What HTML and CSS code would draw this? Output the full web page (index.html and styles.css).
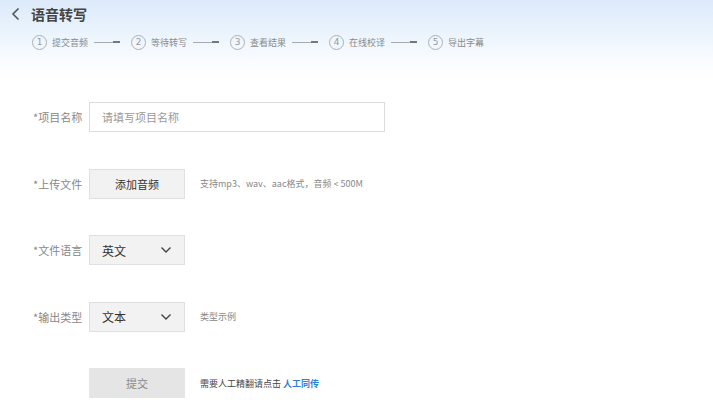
FILE: index.html
```html
<!DOCTYPE html>
<html lang="zh-CN">
<head>
  <meta charset="UTF-8">
  <meta name="viewport" content="width=device-width, initial-scale=1">
  <title>语音转写</title>
  <link rel="stylesheet" href="styles.css">
</head>
<body>

  <div class="page">
    <div class="header">
      <div class="title-bar">
        <svg class="back" width="12" height="14" viewBox="0 0 12 14"><path d="M8.5 1.5 L3 7 L8.5 12.5" fill="none" stroke="#555" stroke-width="1.6"/></svg>
        <span class="title">语音转写</span>
      </div>
      <div class="steps">
        <div class="step"><span class="num">1</span>提交音频</div>
        <span class="arrow"></span>
        <div class="step"><span class="num">2</span>等待转写</div>
        <span class="arrow"></span>
        <div class="step"><span class="num">3</span>查看结果</div>
        <span class="arrow"></span>
        <div class="step"><span class="num">4</span>在线校译</div>
        <span class="arrow"></span>
        <div class="step"><span class="num">5</span>导出字幕</div>
      </div>
    </div>

    <div class="form">
      <div class="row">
        <label class="label">*项目名称</label>
        <input class="input" type="text" placeholder="请填写项目名称">
      </div>
      <div class="row">
        <label class="label">*上传文件</label>
        <div class="btn">添加音频</div>
        <span class="hint">支持mp3、wav、aac格式，音频 &lt; 500M</span>
      </div>
      <div class="row">
        <label class="label">*文件语言</label>
        <div class="select">英文
          <svg width="12" height="8" viewBox="0 0 12 8"><path d="M1.5 1.5 L6 6 L10.5 1.5" fill="none" stroke="#444" stroke-width="1.4"/></svg>
        </div>
      </div>
      <div class="row">
        <label class="label">*输出类型</label>
        <div class="select">文本
          <svg width="12" height="8" viewBox="0 0 12 8"><path d="M1.5 1.5 L6 6 L10.5 1.5" fill="none" stroke="#444" stroke-width="1.4"/></svg>
        </div>
        <span class="hint">类型示例</span>
      </div>
      <div class="row">
        <span class="label"></span>
        <div class="btn btn-submit">提交</div>
        <span class="hint dark">需要人工精翻请点击 <a class="link">人工同传</a></span>
      </div>
    </div>
  </div>

</body>
</html>
```

FILE: styles.css
```css
body {
  margin: 0;
  padding: 0;
  font-family: "Noto Sans CJK SC", "Noto Sans", sans-serif;
  background: #fff;
  color: #333;
}

.page {
  width: 713px;
  height: 406px;
  overflow: hidden;
  background: linear-gradient(to bottom, #dceafa 0px, #eef6fd 40px, #fafcff 62px, #ffffff 78px);
}

.header {
  padding: 4px 0 0 10px;
}

.title-bar {
  display: flex;
  align-items: center;
  height: 20px;
}

.back {
  margin-right: 9px;
}

.title {
  font-size: 14px;
  font-weight: bold;
  color: #444;
}

.steps {
  display: flex;
  align-items: center;
  margin-top: 11px;
  padding-left: 22px;
  font-size: 9px;
  color: #8a8a8a;
}

.step {
  display: flex;
  align-items: center;
}

.num {
  width: 13px;
  height: 13px;
  border: 1px solid #b0b0b0;
  border-radius: 50%;
  display: inline-flex;
  align-items: center;
  justify-content: center;
  font-size: 9px;
  line-height: 1;
  margin-right: 5px;
  font-family: "DejaVu Sans", sans-serif;
  color: #999;
}

.arrow {
  position: relative;
  width: 26px;
  height: 1px;
  background: #aaa;
  margin: 0 11px 0 6px;
}

.arrow::after {
  content: "";
  position: absolute;
  right: 0;
  top: -1px;
  width: 7px;
  height: 2px;
  background: #777;
}

.form {
  display: flex;
  flex-direction: column;
  gap: 36.5px;
  padding: 52px 0 0 33px;
}

.row {
  display: flex;
  align-items: center;
  height: 30px;
}

.label {
  width: 56px;
  font-size: 11px;
  color: #888;
}

.input {
  width: 282px;
  height: 28px;
  border: 1px solid #ddd;
  padding: 0 0 0 12px;
  font-size: 11px;
  font-family: inherit;
  color: #333;
  outline: none;
  background: #fff;
}

.input::placeholder {
  color: #999;
}

.btn {
  width: 96px;
  height: 30px;
  box-sizing: border-box;
  display: flex;
  align-items: center;
  justify-content: center;
  font-size: 11px;
  color: #333;
  background: #f2f2f2;
  border: 1px solid #e0e0e0;
}

.btn-submit {
  background: #e5e5e5;
  border-color: #e5e5e5;
  color: #888;
}

.select {
  width: 96px;
  height: 30px;
  box-sizing: border-box;
  display: flex;
  align-items: center;
  justify-content: space-between;
  padding: 0 12px 0 12px;
  font-size: 12px;
  color: #333;
  background: #f2f2f2;
  border: 1px solid #e0e0e0;
}

.hint {
  margin-left: 15px;
  font-size: 9px;
  color: #888;
}

.hint.dark {
  color: #444;
}

.link {
  color: #2f7fd8;
  font-weight: bold;
}
```
